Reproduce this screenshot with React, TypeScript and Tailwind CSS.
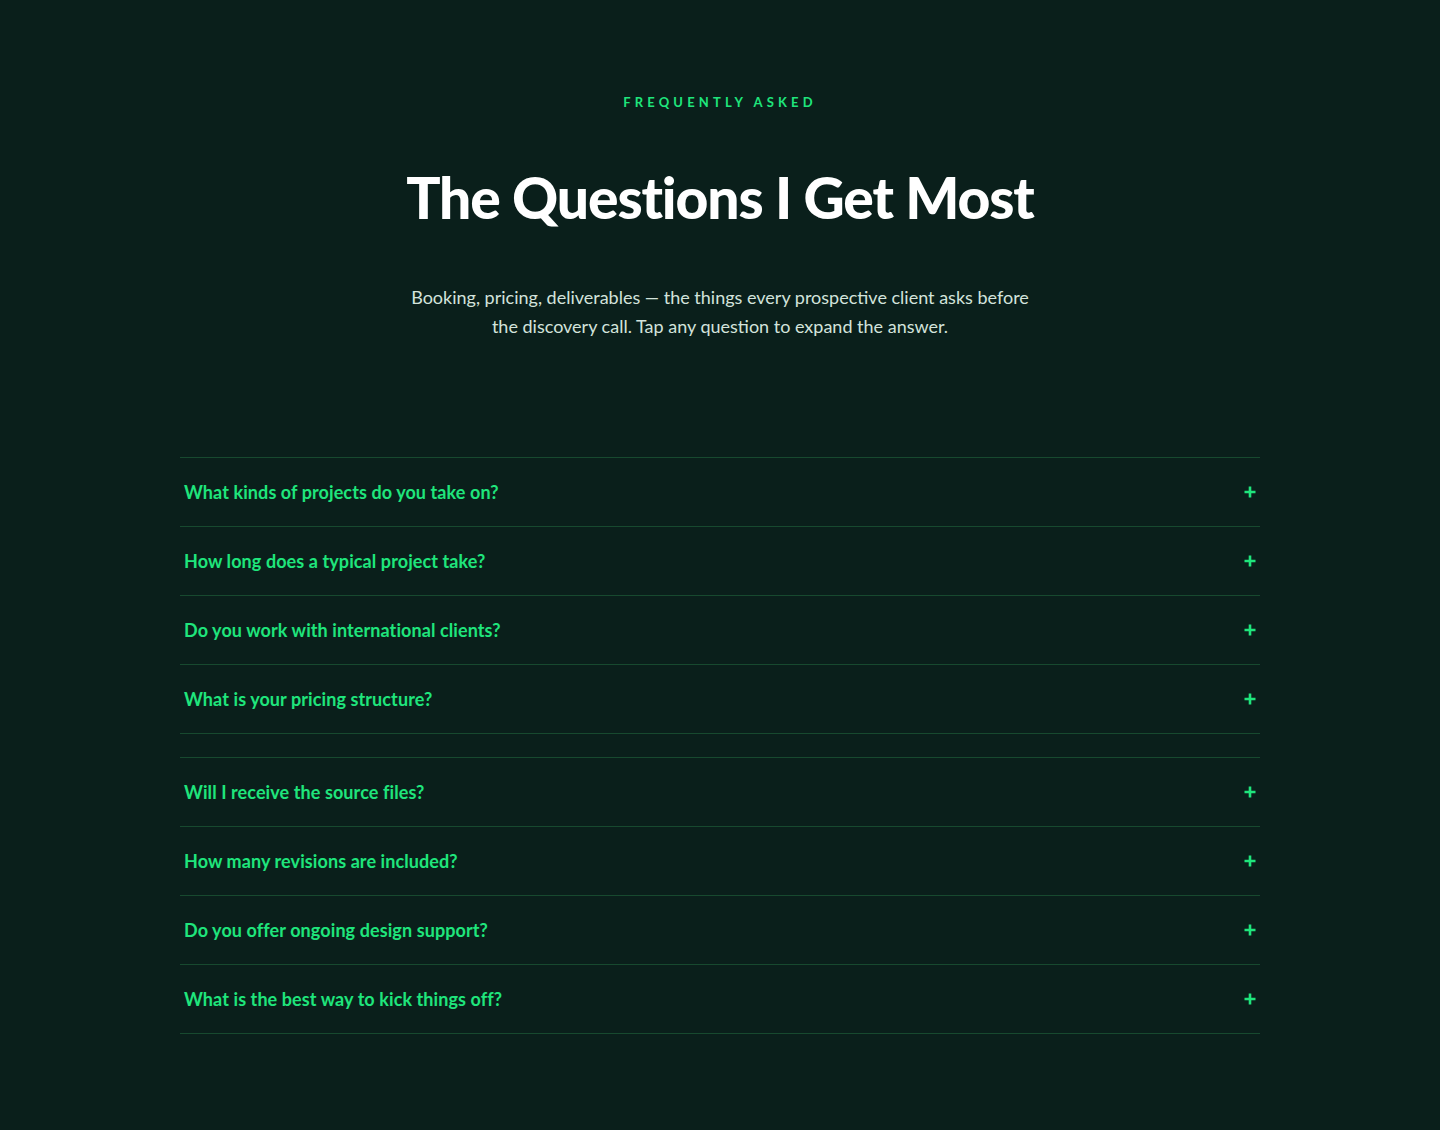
import React from "react";

const groups: string[][] = [
  [
    "What kinds of projects do you take on?",
    "How long does a typical project take?",
    "Do you work with international clients?",
    "What is your pricing structure?",
  ],
  [
    "Will I receive the source files?",
    "How many revisions are included?",
    "Do you offer ongoing design support?",
    "What is the best way to kick things off?",
  ],
];

const font = { fontFamily: "Lato, 'Noto Sans', sans-serif" };

function Row({ q }: { q: string }) {
  return (
    <button
      type="button"
      className="flex h-[69px] w-full items-center justify-between border-b border-[#17492f] px-1 text-left"
    >
      <span className="text-[18px] font-bold tracking-[0.005em] text-[#1fe57c]">{q}</span>
      <svg width="12" height="12" viewBox="0 0 12 12">
        <path d="M6 0.5v11M0.5 6h11" stroke="#1fe57c" strokeWidth="2.6" />
      </svg>
    </button>
  );
}

export default function App() {
  return (
    <div className="min-h-[1130px] w-full bg-[#0a1f1b]" style={font}>
      <div className="mx-auto flex w-[1080px] flex-col items-center pt-[93px]">
        <p className="text-[13px] font-bold uppercase leading-[18px] tracking-[0.32em] text-[#1fe57c]">
          Frequently Asked
        </p>
        <h1 className="mt-[58px] text-[57px] font-black leading-none tracking-[-0.02em] text-white">
          The Questions I Get Most
        </h1>
        <p className="mt-[57px] w-[640px] text-center text-[18px] leading-[29px] text-[#d3e3dc]">
          Booking, pricing, deliverables — the things every prospective client asks before the
          discovery call. Tap any question to expand the answer.
        </p>
        <div className="mt-[116px] flex w-full flex-col gap-[23px]">
          {groups.map((g, i) => (
            <div key={i} className="border-t border-[#17492f]">
              {g.map((q) => (
                <Row key={q} q={q} />
              ))}
            </div>
          ))}
        </div>
      </div>
    </div>
  );
}
